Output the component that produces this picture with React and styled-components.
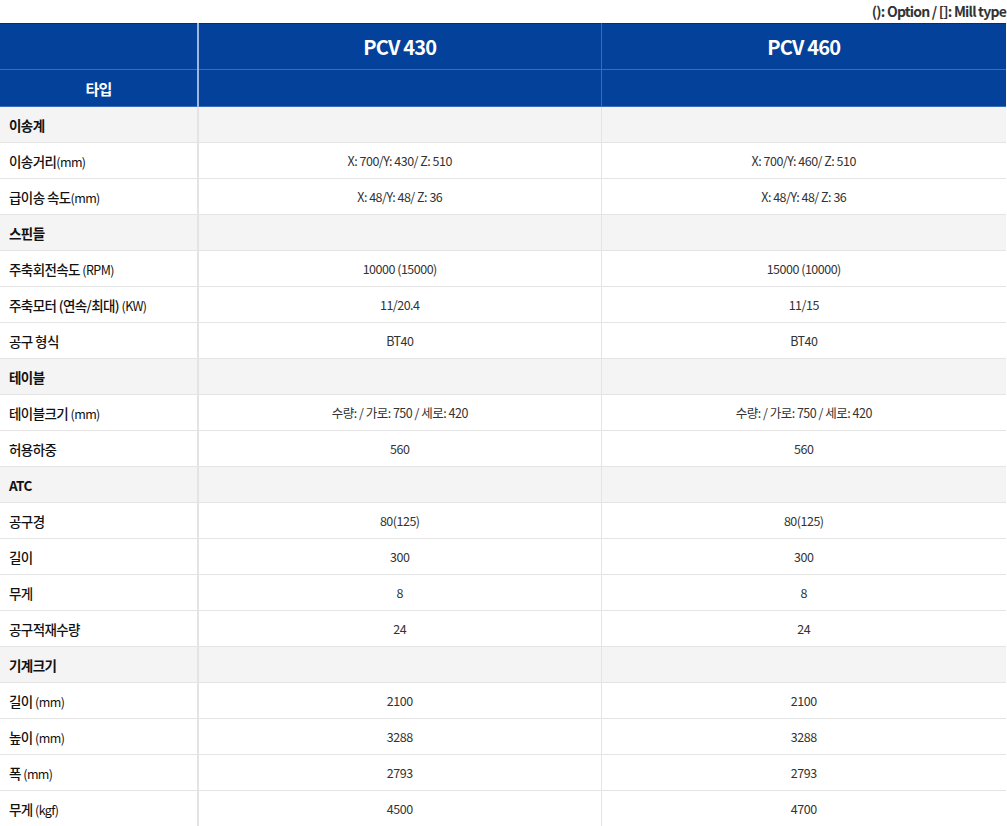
import React from "react";
import styled, { createGlobalStyle } from "styled-components";

const Global = createGlobalStyle`
  html, body { margin: 0; padding: 0; background: #fff; }
  body { font-family: "Noto Sans CJK KR", "Noto Sans", sans-serif; color: #222; }
`;

const Wrap = styled.div`
  width: 1007px;
`;
const Note = styled.div`
  height: 23px;
  text-align: right;
  font-size: 14px;
  font-weight: 700;
  letter-spacing: -0.8px;
  color: #333;
  line-height: 23px;
  padding-right: 1px;
  box-sizing: border-box;
`;
const Table = styled.table`
  width: 1006px;
  border-collapse: collapse;
  table-layout: fixed;
  border-top: 1px solid #1a2a4a;
`;
const Th = styled.th`
  background: #03419b;
  color: #fff;
  font-weight: 700;
  font-size: ${p => (p.$big ? "20px" : "15px")};
  letter-spacing: -0.8px;
  height: ${p => (p.$big ? "45px" : "36px")};
  padding: 0;
  border: 1px solid #3b6cb8;
  border-top: none;
  &:first-child { border-left: none; border-right: 2px solid #9fb6dd; }
  &:last-child { border-right: none; }
`;
const Tr = styled.tr`
  height: 36px;
  background: ${p => (p.$section ? "#f4f4f4" : "#fff")};
`;
const Label = styled.td`
  padding: 0 0 0 9px;
  font-size: 13.5px;
  font-weight: ${p => (p.$section ? 700 : 500)};
  letter-spacing: -0.6px;
  color: #111;
  border-bottom: 1px solid #e4e4e4;
  border-right: 2px solid #e4e4e4;
  & small { font-size: 12.5px; font-weight: 400; }
`;
const Cell = styled.td`
  text-align: center;
  font-size: 12.5px;
  letter-spacing: -0.5px;
  color: #333;
  border-bottom: 1px solid #e4e4e4;
  border-right: 1px solid #e4e4e4;
  &:last-child { border-right: none; }
`;

const rows = [
  ["이송계"],
  ["이송거리", "(mm)", "X: 700/Y: 430/ Z: 510", "X: 700/Y: 460/ Z: 510"],
  ["급이송 속도", "(mm)", "X: 48/Y: 48/ Z: 36", "X: 48/Y: 48/ Z: 36"],
  ["스핀들"],
  ["주축회전속도 ", "(RPM)", "10000 (15000)", "15000 (10000)"],
  ["주축모터 (연속/최대) ", "(KW)", "11/20.4", "11/15"],
  ["공구 형식", "", "BT40", "BT40"],
  ["테이블"],
  ["테이블크기 ", "(mm)", "수량: / 가로: 750 / 세로: 420", "수량: / 가로: 750 / 세로: 420"],
  ["허용하중", "", "560", "560"],
  ["ATC"],
  ["공구경", "", "80(125)", "80(125)"],
  ["길이", "", "300", "300"],
  ["무게", "", "8", "8"],
  ["공구적재수량", "", "24", "24"],
  ["기계크기"],
  ["길이 ", "(mm)", "2100", "2100"],
  ["높이 ", "(mm)", "3288", "3288"],
  ["폭 ", "(mm)", "2793", "2793"],
  ["무게 ", "(kgf)", "4500", "4700"],
];

export default function App() {
  return (
    <Wrap>
      <Global />
      <Note>(): Option / []: Mill type</Note>
      <Table>
        <colgroup>
          <col style={{ width: 198 }} />
          <col style={{ width: 403 }} />
          <col />
        </colgroup>
        <thead>
          <tr>
            <Th $big />
            <Th $big>PCV 430</Th>
            <Th $big>PCV 460</Th>
          </tr>
          <tr>
            <Th>타입</Th>
            <Th />
            <Th />
          </tr>
        </thead>
        <tbody>
          {rows.map((r, i) =>
            r.length === 1 ? (
              <Tr key={i} $section>
                <Label $section>{r[0]}</Label>
                <Cell />
                <Cell />
              </Tr>
            ) : (
              <Tr key={i}>
                <Label>
                  {r[0]}
                  {r[1] && <small>{r[1]}</small>}
                </Label>
                <Cell>{r[2]}</Cell>
                <Cell>{r[3]}</Cell>
              </Tr>
            )
          )}
        </tbody>
      </Table>
    </Wrap>
  );
}
